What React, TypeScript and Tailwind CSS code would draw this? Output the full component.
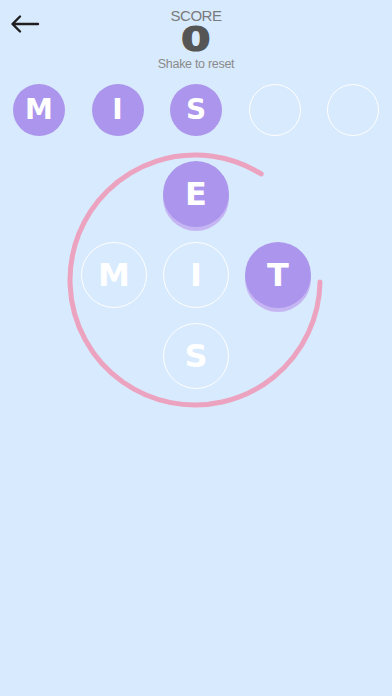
const font = { fontFamily: '"DejaVu Sans", "Liberation Sans", sans-serif' };

function Tile({ letter, filled, size = "top" }: { letter?: string; filled?: boolean; size?: "top" | "big" }) {
  const dim = size === "top" ? "w-[52px] h-[52px] text-[28px]" : "w-[66px] h-[66px] text-[32px]";
  if (filled) {
    return (
      <div
        className={`${dim} rounded-full bg-[#ac95ec] flex items-center justify-center text-white font-bold ${
          size === "big" ? "shadow-[0_4px_0_#c5b6f3]" : ""
        }`}
        style={font}
      >
        {letter}
      </div>
    );
  }
  return (
    <div
      className={`${dim} rounded-full border-[1.5px] border-white flex items-center justify-center text-white font-bold`}
      style={font}
    >
      {letter}
    </div>
  );
}

function Arc() {
  // circle centre (128,128), r 125; gap between 0deg and 58deg (upper right)
  const r = 125;
  const cx = 128;
  const cy = 128;
  const a = (58 * Math.PI) / 180;
  const sx = cx + r * Math.cos(a);
  const sy = cy - r * Math.sin(a);
  const ex = cx + r;
  const ey = cy + 2;
  return (
    <svg width="256" height="256" viewBox="0 0 256 256" className="absolute left-0 top-0">
      <path
        d={`M ${sx} ${sy} A ${r} ${r} 0 1 0 ${ex} ${ey}`}
        fill="none"
        stroke="#eca3bf"
        strokeWidth="5"
        strokeLinecap="round"
      />
    </svg>
  );
}

export default function App() {
  return (
    <div className="w-[392px] h-[696px] bg-[#d8eafd] relative overflow-hidden" style={{ fontFamily: '"Liberation Sans", Arial, sans-serif' }}>
      <div className="absolute left-[10px] top-[14px]">
        <svg width="30" height="20" viewBox="0 0 30 20">
          <path d="M28 10 H3 M10 2.5 L2.5 10 L10 17.5" fill="none" stroke="#1f1f1f" strokeWidth="2.4" strokeLinecap="round" strokeLinejoin="round" />
        </svg>
      </div>

      <div className="flex flex-col items-center pt-[6px]">
        <div className="text-[15px] leading-[20px] text-[#7a7a7a] tracking-[-0.5px]">SCORE</div>
        <div className="h-[26px] flex items-center justify-center">
          <span
            className="block text-[34px] leading-[26px] font-bold text-[#555555] scale-x-[1.25] [-webkit-text-stroke:1.2px_#555555]"
            style={font}
          >
            0
          </span>
        </div>
        <div className="mt-[4px] text-[12.5px] leading-[16px] text-[#8a8a8a] tracking-[-0.3px]">Shake to reset</div>
      </div>

      <div className="flex justify-between px-[13px] mt-[12px]">
        <Tile letter="M" filled />
        <Tile letter="I" filled />
        <Tile letter="S" filled />
        <Tile />
        <Tile />
      </div>

      <div className="relative w-[256px] h-[256px] mt-[16px] ml-[67px]">
        <Arc />
        <div className="absolute left-[14px] top-[9px] grid grid-cols-[66px_66px_66px] gap-x-[16px] gap-y-[15px]">
          <div />
          <Tile letter="E" filled size="big" />
          <div />
          <Tile letter="M" size="big" />
          <Tile letter="I" size="big" />
          <Tile letter="T" filled size="big" />
          <div />
          <Tile letter="S" size="big" />
          <div />
        </div>
      </div>
    </div>
  );
}
